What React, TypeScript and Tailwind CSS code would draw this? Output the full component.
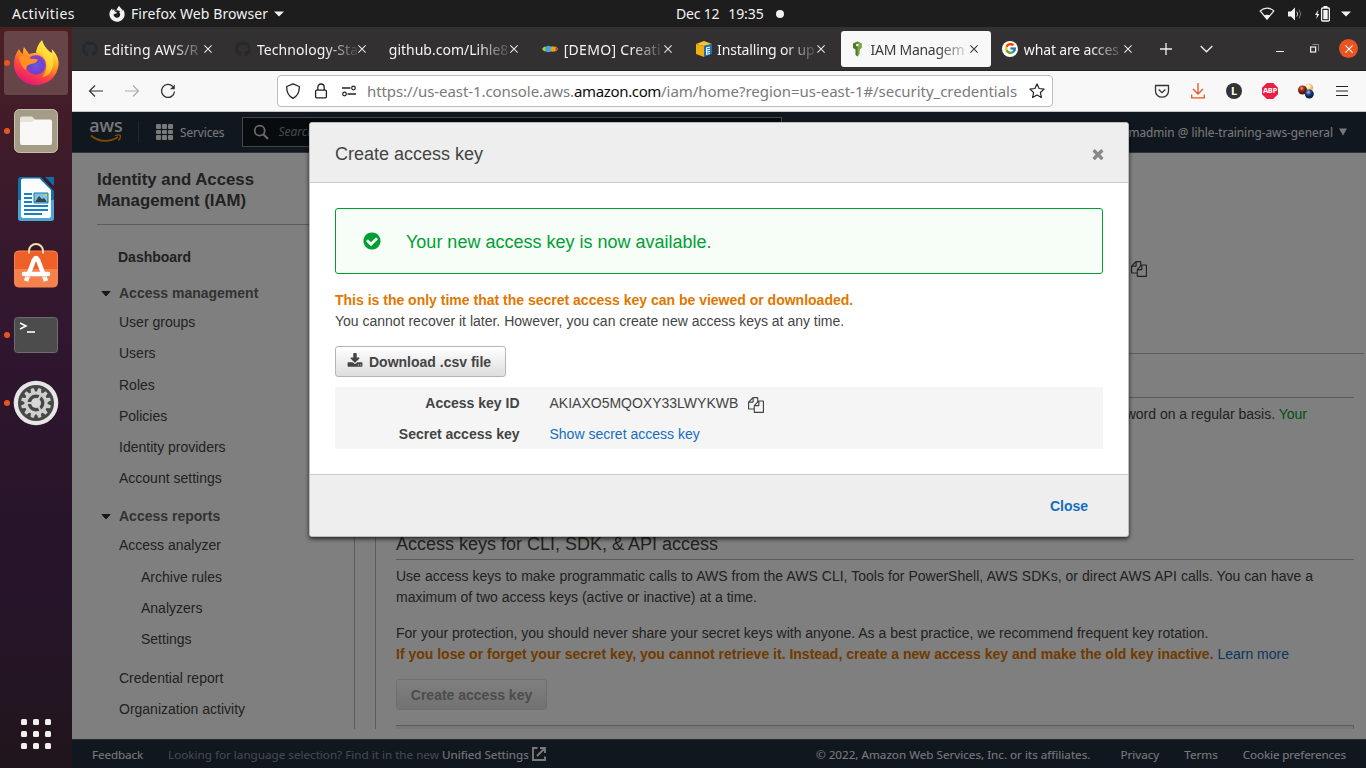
import React from 'react';
import { FaGithub, FaFirefoxBrowser } from 'react-icons/fa';
import { FcGoogle } from 'react-icons/fc';

const COPY =
  'M1696 384q40 0 68 28t28 68v1216q0 40-28 68t-68 28h-960q-40 0-68-28t-28-68v-288h-544q-40 0-68-28t-28-68v-672q0-40 20-88t48-76l408-408q28-28 76-48t88-20h416q40 0 68 28t28 68v328q68-40 128-40h416zm-544 213l-299 299h299v-299zm-640-384l-299 299h299v-299zm196 647l316-316v-416h-384v416q0 40-28 68t-68 28h-416v640h512v-256q0-40 20-88t48-76zm956 804v-1152h-384v416q0 40-28 68t-68 28h-416v640h896z';
const DOWNLOAD =
  'M1344 1344q0-26-19-45t-45-19-45 19-19 45 19 45 45 19 45-19 19-45zm256 0q0-26-19-45t-45-19-45 19-19 45 19 45 45 19 45-19 19-45zm128-224v320q0 40-28 68t-68 28h-1472q-40 0-68-28t-28-68v-320q0-40 28-68t68-28h465l135 136q58 56 136 56t136-56l136-136h464q40 0 68 28t28 68zm-325-569q17 41-14 70l-448 448q-18 19-45 19t-45-19l-448-448q-31-29-14-70 17-39 59-39h256v-448q0-26 19-45t45-19h256q26 0 45 19t19 45v448h256q42 0 59 39z';
const CHECK =
  'M1412 734q0-28-18-46l-91-90q-19-19-45-19t-45 19l-408 407-226-226q-19-19-45-19t-45 19l-91 90q-18 18-18 46 0 27 18 45l362 362q19 19 45 19 27 0 46-19l543-543q18-18 18-45zm252 162q0 209-103 385.5t-279.5 279.5-385.5 103-385.5-103-279.5-279.5-103-385.5 103-385.5 279.5-279.5 385.5-103 385.5 103 279.5 279.5 103 385.5z';
const TIMES =
  'M1490 1322q0 40-28 68l-136 136q-28 28-68 28t-68-28l-294-294-294 294q-28 28-68 28t-68-28l-136-136q-28-28-28-68t28-68l294-294-294-294q-28-28-28-68t28-68l136-136q28-28 68-28t68 28l294 294 294-294q28-28 68-28t68 28l136 136q28 28 28 68t-28 68l-294 294 294 294q28 28 28 68z';

function Glyph({ d, className }: { d: string; className: string }) {
  return (
    <svg viewBox="0 0 1792 1792" fill="currentColor" className={className}>
      <path d={d} />
    </svg>
  );
}

function Svg({ size = 16, box = 16, className = '', children }: { size?: number; box?: number; className?: string; children: React.ReactNode }) {
  return (
    <svg width={size} height={size} viewBox={`0 0 ${box} ${box}`} fill="none" className={`shrink-0 ${className}`}>
      {children}
    </svg>
  );
}

/* ---------- GNOME top bar ---------- */

function TopBar() {
  return (
    <header className="flex h-[27px] shrink-0 items-center bg-[#1d1d1d] text-[14px] text-[#f2f2f2]">
      <div className="flex w-[676px] items-center pl-3">
        <span className="tracking-[0.46px]">Activities</span>
        <FaFirefoxBrowser className="ml-[34px] size-[16px]" />
        <span className="ml-[6px] tracking-[0.09px]">Firefox Web Browser</span>
        <svg width="10" height="6" className="ml-[6px]"><path d="M0 .5h10L5 5.5z" fill="#f2f2f2" /></svg>
      </div>
      <span className="tracking-[-0.2px]">Dec 12</span>
      <span className="ml-[9px] tracking-[-0.1px]">19:35</span>
      <span className="ml-[12px] size-2 rounded-full bg-[#f2f2f2]" />
      <div className="ml-auto flex items-center pr-[15px]">
        <Svg className="mr-[12px]">
          <path d="M1.2 5C5 1.2 11 1.2 14.8 5L8 13z" stroke="#e8e8e8" strokeWidth="1.2" />
          <path d="M4.800 9.700Q8 8 11.200 9.700L8 13.800z" fill="#f2f2f2" />
        </Svg>
        <Svg className="mr-[11px]">
          <path d="M1 5.500h3l4-4v13l-4-4H1z" fill="#f2f2f2" />
          <path d="M9.800 5.500q1.800 2.500 0 5" stroke="#ccc" />
          <path d="M12.200 3.600q3 4.400 0 8.800" stroke="#777" />
        </Svg>
        <Svg className="mr-[11px]">
          <path d="M4.500 3.500L1 9h2l-.8 4L5.400 8h-2z" fill="#f2f2f2" />
          <path d="M9.500 0h4v2h-4z" fill="#f2f2f2" />
          <rect x="7.600" y="2" width="7.800" height="13" rx="1" stroke="#f2f2f2" strokeWidth="1.300" />
          <path d="M9.300 4h4.400v9.200H9.300z" fill="#f2f2f2" />
        </Svg>
        <svg width="10" height="6"><path d="M0 .5h10L5 5.5z" fill="#f2f2f2" /></svg>
      </div>
    </header>
  );
}

/* ---------- Dock ---------- */

function DockItem({ running, active, children }: { running?: boolean; active?: boolean; children: React.ReactNode }) {
  return (
    <div className="flex h-[68px] w-full items-center">
      <div className={`mx-1 flex size-16 items-center rounded-[3px] ${active ? 'bg-[#674448]' : ''}`}>
        <span className={`size-[6px] rounded-full ${running ? 'bg-[#e95420]' : ''}`} />
        <div className="ml-1 flex size-11 items-center justify-center">{children}</div>
      </div>
    </div>
  );
}

const teeth = [0, 30, 60, 90, 120, 150, 180, 210, 240, 270, 300, 330];

function Dock() {
  return (
    <nav className="flex w-[72px] shrink-0 flex-col bg-[linear-gradient(#4a2022_0px,#431d28_70px,#30162f_300px,#2b152b_420px,#26142a_560px,#21151c_741px)] pt-[2px]">
      <DockItem running active>
        <Svg size={46} box={46} className="mt-[-3px]">
          <defs>
            <linearGradient id="ff" x1=".75" y1="0" x2=".25" y2="1">
              <stop offset=".1" stopColor="#fff44f" /><stop offset=".38" stopColor="#ffa51f" /><stop offset=".65" stopColor="#ff4a3d" /><stop offset="1" stopColor="#e0107f" />
            </linearGradient>
            <linearGradient id="ffe" x1=".8" y1="0" x2=".3" y2="1">
              <stop offset="0" stopColor="#fff550" /><stop offset=".6" stopColor="#ffcf30" /><stop offset="1" stopColor="#ff8a1c" />
            </linearGradient>
            <radialGradient id="ffb" cx=".5" cy=".55" r=".6">
              <stop offset="0" stopColor="#6d57e8" /><stop offset=".6" stopColor="#7042c8" /><stop offset="1" stopColor="#a93bd8" />
            </radialGradient>
          </defs>
          <path d="M6 10c1 2 2 4 4 5 0-3 0-5 1-7l5 7c3-1 5-1 7-1 1-5 3-10 6-12l5 10c3 1 4 1 5 2 0-1 0-2-.3-4C44 15 46 21 45.500 26 44 38 35 46 23 46S1 37 1 25c0-6 2-11 5-15z" fill="url(#ff)" />
          <path d="M23 13c1-5 3-9 6-12 1 5 4 8 7 11 5 5 6 14 2 20-2 4-6 6-9 6 5-5 7-16 0-22-2-2-4-2-6-3z" fill="url(#ffe)" />
          <circle cx="23" cy="26" r="10" fill="url(#ffb)" />
          <path d="M6 18c4-2 9-2 12 2 2-.5 5 0 7 .6-1 3-4 4-7 4.500-4 1-5 3-5 6C9 29 7 23 6 18z" fill="#ff9122" />
        </Svg>
      </DockItem>
      <DockItem running>
        <Svg size={46} box={46}>
          <rect x="1.500" y="1.500" width="43" height="43" rx="5" fill="#a49c86" stroke="#c6c1ae" />
          <path d="M7 10.500q0-2 2-2h10l4 4h14q2 0 2 2v8H7z" fill="#e6e3da" />
          <path d="M7 16q0-2 2-2h10l3-2.500h15q2 0 2 2V35q0 2-2 2H9q-2 0-2-2z" fill="#f9f8f6" />
        </Svg>
      </DockItem>
      <DockItem>
        <svg width="38" height="46" viewBox="0 0 38 46">
          <path d="M4 1h20l13 13v28q0 3-3 3H4q-3 0-3-3V4q0-3 3-3z" fill="#1171a8" />
          <path d="M1 24h36v18q0 3-3 3H4q-3 0-3-3z" fill="#4aa6d3" />
          <path d="M24 1h4l9 9v5z" fill="#3b1a2b" />
          <path d="M6 2.500h16.500L34 14v26q0 2-2 2H6q-2 0-2-2V4.500q0-2 2-2z" fill="#fbfcfd" />
          <path d="M28 1h9v9z" fill="#0f6ea5" />
          <path d="M7 18h8M7 22h8M7 26h8M7 30h24M7 34h24M7 38h18" stroke="#1a80bb" strokeWidth="2" />
          <path d="M17 17h14v10H17z" fill="#7cc3e8" /><path d="M27 18h3v3z" fill="#f6c915" />
          <path d="M18 26l4-6 3 3 2-1 3 4z" fill="#3e4446" /><path d="M17 17h14v10H17z" fill="none" stroke="#1478b2" />
        </svg>
      </DockItem>
      <DockItem>
        <Svg size={46} box={46} className="mt-[-2px]">
          <rect x="1.500" y="8" width="43" height="36" rx="4" fill="#ef6029" stroke="#f58455" />
          <path d="M2 26h42v14q0 4-4 4H6q-4 0-4-4z" fill="#f5824c" />
          <path d="M16 10.500V8a7 7 0 0 1 14 0v2.500" stroke="#f3dfae" strokeWidth="2" />
          <path d="M13 38L21 17q2-4 4 0l8 21" stroke="#fff" strokeWidth="4.500" />
          <path d="M11 31h24" stroke="#fff" strokeWidth="4.500" strokeLinecap="round" />
          <path d="M12 33.700h22" stroke="#f7a47e" strokeWidth=".7" />
        </Svg>
      </DockItem>
      <DockItem running>
        <Svg size={46} box={46}>
          <rect x="1.500" y="5.500" width="43" height="35" rx="3" fill="#4b4c4b" stroke="#6e6d6d" />
          <path d="M7 11l6 3-6 3" stroke="#fff" strokeWidth="1.600" /><path d="M14 20h8" stroke="#fff" strokeWidth="1.600" />
        </Svg>
      </DockItem>
      <DockItem running>
        <Svg size={46} box={46}>
          <circle cx="23" cy="23" r="22.300" fill="#e6e6e5" />
          <circle cx="23" cy="23" r="18" fill="#474747" />
          {teeth.map((a) => (
            <path key={a} d="M21.500 8h3l.8 4.500h-4.600z" fill="#cfcfcf" transform={`rotate(${a + 15} 23 23)`} />
          ))}
          <circle cx="23" cy="23" r="10" stroke="#cfcfcf" strokeWidth="3.200" />
          <circle cx="23" cy="23" r="5" fill="#d9d9d9" />
          <path d="M25 20l4-7M25 26l4 7M20 23h-8" stroke="#cfcfcf" strokeWidth="2.200" />
        </Svg>
      </DockItem>
      <div className="mb-[19px] ml-[21px] mt-auto grid w-[30px] grid-cols-3 gap-[6px]">
        {teeth.slice(0, 9).map((k) => (
          <span key={k} className="size-[6px] rounded-[1.5px] bg-[#f2f0ee]" />
        ))}
      </div>
    </nav>
  );
}

/* ---------- Browser ---------- */

const CloseX = ({ color }: { color: string }) => (
  <svg width="8" height="8" viewBox="0 0 8 8" className="shrink-0"><path d="M.4.4l7.200 7.200M7.600.4L.4 7.600" stroke={color} strokeWidth="1.100" /></svg>
);

function Tab({ icon, title, tracking, active }: { icon?: React.ReactNode; title: string; tracking: string; active?: boolean }) {
  return (
    <div className={`flex h-9 w-[150px] shrink-0 items-center rounded-[3px] pl-2 ${active ? 'bg-[#f8f8f8] text-[#3b3b3b]' : 'text-[#f4f4f4]'}`}>
      {icon && <span className="mr-[5.500px] flex size-4 shrink-0 items-center">{icon}</span>}
      <span className={`flex-1 whitespace-nowrap pt-px text-[14px] ${tracking} [mask-image:linear-gradient(to_left,rgba(0,0,0,0.1)_1px,black_33px)]`}>{title}</span>
      <span className="mr-[12.500px] flex"><CloseX color={active ? '#3b3b3b' : '#e6e6e6'} /></span>
    </div>
  );
}

function TabBar() {
  return (
    <div className="flex h-[44px] items-center gap-[3.400px] border-b border-[#222] bg-[#323031] pl-[2px]">
      <Tab icon={<FaGithub className="size-4 text-[#24292e]" />} title="Editing AWS/R" tracking="tracking-[0.18px]" />
      <Tab icon={<FaGithub className="size-4 text-[#24292e]" />} title="Technology-Sta" tracking="tracking-[0.08px]" />
      <Tab title="github.com/Lihle8" tracking="tracking-[0px]" />
      <Tab
        icon={<Svg><path d="M0 8l2-2.200h12L16 8l-2 2.200H2z" fill="#b5c927" /><circle cx="6.500" cy="8" r="3.200" fill="#37a6e6" /><circle cx="11" cy="8" r="2.600" fill="#f59a1c" /><path d="M13.500 6L16 8l-2.500 2z" fill="#d9372a" /></Svg>}
        title="[DEMO] Creati" tracking="tracking-[0.3px]" />
      <Tab
        icon={<Svg><path d="M0 3l8-3 8 3-8 2z" fill="#f8c534" /><path d="M0 3l8 2v11l-8-3z" fill="#eeb012" /><path d="M8 5l8-2v10l-8 3z" fill="#1a6fb4" /><path d="M10 6.500l4-1v7.500l-4 1z" fill="#fff" /><path d="M11 7.800l3-.7M11 10l3-.6M11 12.200l3-.7" stroke="#1a6fb4" /></Svg>}
        title="Installing or up" tracking="tracking-[-0.16px]" />
      <Tab active
        icon={<Svg><path d="M4 2.500L8.500.500l4 2V7l-2 1.200v1.500l-1 .6 1 .8-1 .8 1 .8-2 2.800-2-1.500V8.500L4 7z" fill="#4b7a2b" /><path d="M8.500.500l4 2V7l-2 1.200v4.500l-2 2.800z" fill="#7ba63f" /><circle cx="8.300" cy="4" r="1.300" fill="#fff" /></Svg>}
        title="IAM Managem" tracking="tracking-[-0.26px]" />
      <Tab
        icon={<span className="flex size-4 items-center justify-center rounded-full bg-white"><FcGoogle className="size-[13px]" /></span>}
        title="what are acces" tracking="tracking-[-0.150px]" />
      <div className="ml-auto flex items-center pr-[8px]">
        <svg width="12" height="12" className="mr-[28px]"><path d="M6 0v12M0 6h12" stroke="#f0f0f0" strokeWidth="1.300" /></svg>
        <svg width="13" height="8" className="mr-[63px]"><path d="M.7 1l5.800 5.800L12.300 1" stroke="#f0f0f0" strokeWidth="1.300" fill="none" /></svg>
        <svg width="8" height="12" className="mr-[26px]"><path d="M0 8.500h8" stroke="#f2f2f2" /></svg>
        <svg width="9" height="9" className="mr-[20px]"><path d="M2.500.5H8.500V7" stroke="#8c8c8c" fill="none" /><rect x=".6" y="3" width="5" height="5" stroke="#f2f2f2" strokeWidth="1.200" fill="none" /></svg>
        <span className="flex size-[19px] items-center justify-center rounded-full bg-[#e95420]"><CloseX color="#fff" /></span>
      </div>
    </div>
  );
}

function Toolbar() {
  return (
    <div className="flex h-[41px] items-center border-b border-[#c4c4c4] bg-[#f8f8f8] text-[#333]">
      <div className="flex w-[205px] items-center pl-4">
        <Svg className="mr-5"><path d="M15 8H1.500M7 2.500L1.500 8 7 13.500" stroke="#333" strokeWidth="1.200" /></Svg>
        <Svg className="mr-5"><path d="M1 8h13.500M9 2.500L14.500 8 9 13.500" stroke="#acacac" strokeWidth="1.200" /></Svg>
        <Svg><path d="M12.800 3.500A6.500 6.500 0 1 0 14.500 8.500" stroke="#333" strokeWidth="1.300" /><path d="M14.800 1.500V6.300H10z" fill="#333" /></Svg>
      </div>
      <div className="flex h-8 w-[776px] items-center rounded-[4px] border border-[#bdbdbd] bg-white pl-[7px]">
        <Svg className="mr-3"><path d="M8 .8L14.300 3.500C14.500 9 12.500 13 8 15.300 3.500 13 1.500 9 1.700 3.500z" stroke="#222" strokeWidth="1.300" strokeLinejoin="round" /></Svg>
        <Svg className="mr-3"><rect x="2.600" y="7.200" width="10.800" height="7.600" rx="1" stroke="#222" strokeWidth="1.300" /><path d="M4.800 7V4.200a3.200 3.200 0 0 1 6.400 0V7" stroke="#222" strokeWidth="1.300" /></Svg>
        <Svg className="mr-[10px]"><path d="M1 5h8.500M6.500 11H15" stroke="#222" strokeWidth="1.300" /><circle cx="12.500" cy="5" r="1.800" stroke="#222" strokeWidth="1.200" /><circle cx="3.500" cy="11" r="1.800" stroke="#222" strokeWidth="1.200" /></Svg>
        <span className="whitespace-nowrap text-[15px] text-[#7a7a7a]">
          <span className="tracking-[-0.08px]">https://us-east-1.console.aws.</span>
          <span className="tracking-[-0.36px] text-[#0c0c0c]">amazon.com</span>
          <span className="tracking-[-0.037px]">/iam/home?region=us-east-1#/security_credentials</span>
        </span>
        <Svg className="ml-auto mr-[7px]"><path d="M8 .9l2.100 4.600 5 .6-3.700 3.400 1 5L8 12l-4.400 2.500 1-5L.9 6.100l5-.6z" stroke="#222" strokeWidth="1.200" strokeLinejoin="round" /></Svg>
      </div>
      <div className="ml-auto flex items-center gap-5 pr-4">
        <Svg><path d="M1.500 2.500h13v5.500c0 3.500-3 6.200-6.500 6.200S1.500 11.500 1.500 8z" stroke="#333" strokeWidth="1.300" strokeLinejoin="round" /><path d="M4.700 6.500L8 9.700l3.300-3.200" stroke="#333" strokeWidth="1.300" /></Svg>
        <Svg><path d="M8 0v10.500M3 6l5 5 5-5M1.700 11.500v3.300h12.600v-3.300" stroke="#e95420" strokeWidth="1.300" /></Svg>
        <span className="flex size-4 items-center justify-center rounded-full bg-[#333] text-[11px] font-bold text-white">L</span>
        <span className="flex size-4 items-center justify-center bg-[#ed1e45] text-[7.500px] font-bold tracking-[-0.2px] text-white [clip-path:polygon(30%_0,70%_0,100%_30%,100%_70%,70%_100%,30%_100%,0_70%,0_30%)]">ABP</span>
        <Svg>
          <defs>
            <radialGradient id="by" cx=".4" cy=".3"><stop offset="0" stopColor="#fff" /><stop offset="1" stopColor="#e3bd4d" /></radialGradient>
            <radialGradient id="br" cx=".4" cy=".3"><stop offset="0" stopColor="#f0a090" /><stop offset=".5" stopColor="#b02e1a" /><stop offset="1" stopColor="#5a1a10" /></radialGradient>
            <radialGradient id="bb" cx=".4" cy=".3"><stop offset="0" stopColor="#b5c9f2" /><stop offset=".5" stopColor="#2c51a0" /><stop offset="1" stopColor="#12224e" /></radialGradient>
          </defs>
          <circle cx="11" cy="4.800" r="4.200" fill="url(#by)" /><circle cx="4.500" cy="7" r="4.500" fill="url(#br)" /><circle cx="11.300" cy="11" r="4.500" fill="url(#bb)" />
        </Svg>
        <Svg><path d="M2 3.500h12M2 8h12M2 12.500h12" stroke="#222" strokeWidth="1.200" /></Svg>
      </div>
    </div>
  );
}

/* ---------- AWS console ---------- */

function AwsNav() {
  return (
    <div className="flex h-[41px] shrink-0 items-center border-b border-[#5b6370] bg-[#232f3e] text-[11.800px] text-[#f2f3f3]">
      <div className="ml-[18px] flex w-8 flex-col items-center">
        <span className="h-[13px] text-[18px] font-medium leading-[9px] tracking-[-0.1px]">aws</span>
        <svg width="32" height="9" viewBox="0 0 32 9" fill="none">
          <path d="M1 1.500C9 8.500 20 8.500 28 3" stroke="#f90" strokeWidth="1.800" /><path d="M25 1.500q4-1.200 5.500 0 .2 2.500-2 5" stroke="#f90" strokeWidth="1.300" />
        </svg>
      </div>
      <span className="ml-4 h-[22px] w-px bg-[#46505e]" />
      <div className="ml-[17px] grid w-[17px] grid-cols-3 gap-[1px]">
        {teeth.slice(0, 9).map((k) => (
          <span key={k} className="size-[4.500px] rounded-[1px] bg-[#f2f3f3]" />
        ))}
      </div>
      <span className="ml-[7px] mt-px tracking-[-0.08px]">Services</span>
      <div className="ml-[18px] flex h-[30px] w-[540px] items-center border border-[#8d8d8d] bg-[#10161d] pl-[10px]">
        <Svg><circle cx="6.700" cy="6.700" r="5" stroke="#d5d5d5" strokeWidth="1.800" /><path d="M10.300 10.300L15 15" stroke="#d5d5d5" strokeWidth="2" /></Svg>
        <span className="ml-[9px] text-[12px] italic text-[#8f959b]">Search</span>
      </div>
      <span className="ml-auto mt-[2px] whitespace-nowrap">iamadmin @ lihle-training-aws-general</span>
      <svg width="8" height="8" className="ml-[6px] mr-[19px]"><path d="M0 .5h8l-4 7z" fill="#f2f3f3" /></svg>
    </div>
  );
}

function Group({ label }: { label: string }) {
  return (
    <div className="flex h-[21px] items-center text-[#666]">
      <svg width="10" height="6" className="ml-1 mr-2 mt-px"><path d="M1 .5h8L5 5z" fill="#333" stroke="#333" strokeLinejoin="round" /></svg>
      <span className="font-bold">{label}</span>
    </div>
  );
}

function Items({ labels, className }: { labels: string[]; className: string }) {
  return (
    <ul className={className}>
      {labels.map((l) => (
        <li key={l} className="flex h-[31.250px] items-center">{l}</li>
      ))}
    </ul>
  );
}

function Sidebar() {
  return (
    <aside className="h-[576px] w-[283px] border-r border-[#b8b8b8] pl-[25px] text-[14px] text-[#444]">
      <h2 className="border-b border-[#b8b8b8] pb-[13px] pt-4 text-[16.800px] font-bold leading-[21px]">Identity and Access<br />Management (IAM)</h2>
      <div className="ml-[21px] mt-[22px] flex h-[21px] items-center font-bold">Dashboard</div>
      <div className="mt-[15px]"><Group label="Access management" /></div>
      <Items className="ml-[22px] mt-[3.050px]" labels={['User groups', 'Users', 'Roles', 'Policies', 'Identity providers', 'Account settings']} />
      <div className="mt-[11.650px]"><Group label="Access reports" /></div>
      <Items className="ml-[22px] mt-[3px]" labels={['Access analyzer']} />
      <Items className="ml-[44px] mt-[0.400px]" labels={['Archive rules', 'Analyzers', 'Settings']} />
      <Items className="ml-[22px] mt-[7.400px]" labels={['Credential report', 'Organization activity']} />
    </aside>
  );
}

function Content() {
  return (
    <main className="ml-5 flex h-[576px] w-[989px] flex-col overflow-hidden text-[14px] leading-[21px] text-[#444]">
      <div className="h-[200px] shrink-0 pl-[756px] pt-[108px]"><Glyph d={COPY} className="size-4 text-[#444]" /></div>
      <div className="flex-1 border-l border-t border-[#b8b8b8] pl-5 pr-[10px]">
        <div className="h-11 border-b border-[#b8b8b8]" />
        <p className="mt-[6px] pr-[47px] text-right">password on a regular basis. <span className="text-[#00a02c]">Your</span></p>
        <h3 className="mt-[105px] border-b border-[#b8b8b8] pb-[3px] pt-[2px] text-[18px] leading-6">Access keys for CLI, SDK, &amp; API access</h3>
        <p className="mt-[6px] whitespace-nowrap"><span className="[word-spacing:0.170px]">Use access keys to make programmatic calls to AWS from the AWS CLI, Tools for PowerShell, AWS SDKs, or direct AWS API calls. You can have a</span><br />maximum of two access keys (active or inactive) at a time.</p>
        <p className="mt-[15px] whitespace-nowrap">For your protection, you should never share your secret keys with anyone. As a best practice, we recommend frequent key rotation.<br />
          <b className="text-[#e07700]">If you lose or forget your secret key, you cannot retrieve it. Instead, create a new access key and make the old key inactive.</b> <span className="text-[#146eb4]">Learn more</span>
        </p>
        <button className="mt-[14px] flex h-[31px] w-[151px] items-center justify-center rounded-[3px] border border-[#dedede] bg-linear-to-b from-white to-[#e4e4e4] pt-px font-bold text-[#999]">Create access key</button>
        <div className="mt-[15px] h-5 border-r border-t border-[#b8b8b8] bg-[#eee]" />
      </div>
    </main>
  );
}

function Footer() {
  return (
    <footer className="flex h-[29px] shrink-0 items-center border-t border-[#555] bg-[#232f3e] pl-5 pr-5 pt-[2px] text-[11.670px] text-[#f2f3f3]">
      <span className="tracking-[-0.1px]">Feedback</span>
      <span className="ml-[25px] text-[#8d979e]">Looking for language selection? Find it in the new <span className="text-[#f2f3f3]">Unified Settings</span></span>
      <svg width="14" height="14" viewBox="0 0 14 14" fill="none" className="-mt-[3px] ml-[3px]"><path d="M5.500 1H1v12h12V9.500M8 1h5v5M12.500 1.500L5 9" stroke="#f2f3f3" strokeWidth="1.900" /></svg>
      <span className="ml-auto">© 2022, Amazon Web Services, Inc. or its affiliates.</span>
      <span className="ml-[30px]">Privacy</span>
      <span className="ml-[25px]">Terms</span>
      <span className="ml-[25px] tracking-[-0.120px]">Cookie preferences</span>
    </footer>
  );
}

function Dialog() {
  return (
    <section className="absolute left-[237px] top-[10px] flex h-[415px] w-[820px] flex-col rounded-[3px] border border-[#bcbcbc] bg-white font-['Liberation_Sans',sans-serif] text-[14px] leading-[21px] text-[#444] shadow-[0_2px_4px_rgba(0,0,0,0.7)]">
      <header className="flex h-[60px] shrink-0 items-center rounded-t-[2px] border-b border-[#ccc] bg-[#eee] pl-[25px] pr-[22px] pt-[3px] text-[18px]">
        <span>Create access key</span>
        <Glyph d={TIMES} className="-mt-px ml-auto size-4 text-[#888]" />
      </header>
      <div className="flex-1 px-[25px] pt-[25px]">
        <div className="flex h-[66px] items-center rounded-[3px] border border-[#009f35] bg-[#f6fef7] pl-[26px] text-[18px] text-[#009f35]">
          <Glyph d={CHECK} className="size-[20px]" />
          <span className="ml-[24px] pt-[2px]">Your new access key is now available.</span>
        </div>
        <p className="mt-[16px] font-bold text-[#df7700]">This is the only time that the secret access key can be viewed or downloaded.</p>
        <p>You cannot recover it later. However, you can create new access keys at any time.</p>
        <button className="mt-[14px] flex h-[31px] w-[171px] items-center rounded-[3px] border border-[#b5b5b5] bg-linear-to-b from-white to-[#dedede] pl-[11px] font-bold">
          <Glyph d={DOWNLOAD} className="-mt-px mr-[6px] size-4" />
          <span className="pt-[2px]">Download .csv file</span>
        </button>
        <dl className="mt-[10px] grid h-[62px] grid-cols-[184.500px_1fr] grid-rows-[31px_31px] gap-x-[30px] bg-[#f5f5f5] pt-[6px]">
          <dt className="text-right font-bold">Access key ID</dt>
          <dd className="flex h-[21px] items-center">AKIAXO5MQOXY33LWYKWB<Glyph d={COPY} className="ml-[10px] mt-[2px] size-4" /></dd>
          <dt className="text-right font-bold">Secret access key</dt>
          <dd className="text-[#146ebd]">Show secret access key</dd>
        </dl>
      </div>
      <footer className="flex h-[62px] shrink-0 items-center justify-end rounded-b-[2px] border-t border-[#ccc] bg-[#eee] pr-10 pt-px font-bold text-[#146ebd]">Close</footer>
    </section>
  );
}

export default function App() {
  return (
    <div className="flex h-[768px] w-[1366px] flex-col overflow-hidden font-['Noto_Sans','Open_Sans',sans-serif]">
      <TopBar />
      <div className="flex min-h-0 flex-1">
        <Dock />
        <div className="flex w-[1294px] flex-col">
          <TabBar />
          <Toolbar />
          <div className="relative flex min-h-0 flex-1 flex-col bg-white">
            <AwsNav />
            <div className="flex min-h-0 flex-1 font-['Liberation_Sans',sans-serif]">
              <Sidebar />
              <Content />
            </div>
            <Footer />
            <div className="absolute inset-0 bg-black/50" />
            <Dialog />
          </div>
        </div>
      </div>
    </div>
  );
}
